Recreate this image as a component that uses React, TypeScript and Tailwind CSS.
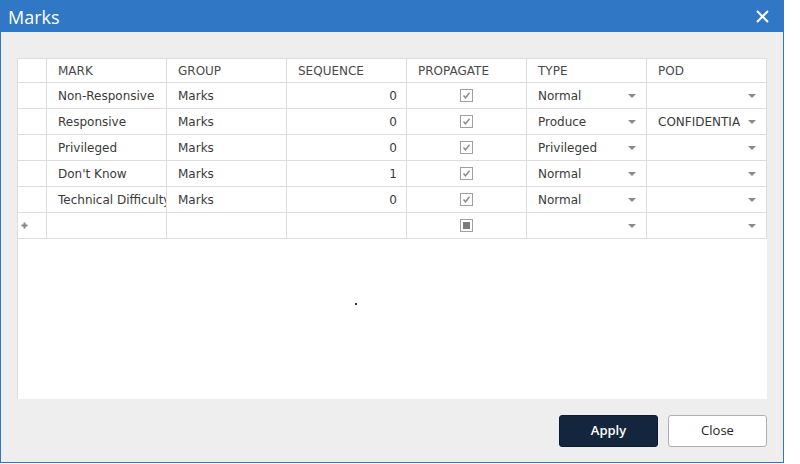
import React from 'react';

type Row = {
  mark: string;
  group: string;
  seq: string;
  propagate: 'checked' | 'empty';
  type: string;
  pod: string;
  isNew?: boolean;
};

const rows: Row[] = [
  { mark: 'Non-Responsive', group: 'Marks', seq: '0', propagate: 'checked', type: 'Normal', pod: '' },
  { mark: 'Responsive', group: 'Marks', seq: '0', propagate: 'checked', type: 'Produce', pod: 'CONFIDENTIAL' },
  { mark: 'Privileged', group: 'Marks', seq: '0', propagate: 'checked', type: 'Privileged', pod: '' },
  { mark: "Don't Know", group: 'Marks', seq: '1', propagate: 'checked', type: 'Normal', pod: '' },
  { mark: 'Technical Difficulty', group: 'Marks', seq: '0', propagate: 'checked', type: 'Normal', pod: '' },
  { mark: '', group: '', seq: '', propagate: 'empty', type: '', pod: '', isNew: true },
];

const cellBase = 'border-r border-b border-[#dddddd] flex items-center overflow-hidden whitespace-nowrap';
const cell = `h-[26px] ${cellBase}`;

const Caret: React.FC = () => (
  <svg width="8" height="4" viewBox="0 0 8 4" className="shrink-0">
    <path d="M0 0 H8 L4 4 Z" fill="#8a8a8a" />
  </svg>
);

const CheckBox: React.FC<{ state: 'checked' | 'empty' }> = ({ state }) => (
  <div className="w-[13px] h-[13px] border border-[#a0a0a0] bg-white flex items-center justify-center">
    {state === 'checked' ? (
      <svg width="9" height="9" viewBox="0 0 9 9">
        <path d="M1.5 4.5 L3.5 6.8 L7.5 1.8" stroke="#8a8a8a" strokeWidth="1.4" fill="none" />
      </svg>
    ) : (
      <div className="w-[7px] h-[7px] bg-[#7a7a7a]" />
    )}
  </div>
);

const headers = ['', 'MARK', 'GROUP', 'SEQUENCE', 'PROPAGATE', 'TYPE', 'POD'];

export default function App() {
  return (
    <div className="w-[800px] h-[464px] bg-white" style={{ fontFamily: 'Tahoma, "DejaVu Sans", Verdana, sans-serif' }}>
      <div className="w-[784px] h-[463px] border border-[#2f77c4] bg-[#eeeeee] flex flex-col">
        {/* title bar */}
        <div className="h-[31px] bg-[#3077c6] flex items-center justify-between pl-[7px] pr-[14px] shrink-0">
          <span className="text-white text-[18px] leading-none" style={{ fontFamily: '"Open Sans", "DejaVu Sans", sans-serif' }}>
            Marks
          </span>
          <svg width="13" height="13" viewBox="0 0 13 13">
            <path d="M1 1 L12 12 M12 1 L1 12" stroke="white" strokeWidth="2" />
          </svg>
        </div>

        {/* body */}
        <div className="flex-1 flex flex-col px-4 pt-[26px] pb-[15px]">
          <div className="h-[341px] bg-white border-l border-t border-[#dddddd] relative">
            <div className="grid grid-cols-[29px_120px_120px_120px_120px_120px_120px] text-[12px] text-[#3a3a3a]">
              {headers.map((h, i) => (
                <div key={i} className={`h-[24px] ${cellBase} text-[#4a4a4a] pl-[11px]`}>
                  {h}
                </div>
              ))}
              {rows.map((r, i) => (
                <React.Fragment key={i}>
                  <div className={`${cell} pl-[3px]`}>
                    {r.isNew && (
                      <svg width="7" height="7" viewBox="0 0 7 7">
                        <path d="M3.5 0.5 V6.5 M0.5 3.5 H6.5" stroke="#888888" strokeWidth="2" />
                      </svg>
                    )}
                  </div>
                  <div className={`${cell} pl-[11px]`}>{r.mark}</div>
                  <div className={`${cell} pl-[11px]`}>{r.group}</div>
                  <div className={`${cell} justify-end pr-[9px]`}>{r.seq}</div>
                  <div className={`${cell} justify-center`}>
                    <CheckBox state={r.propagate} />
                  </div>
                  <div className={`${cell} pl-[11px] pr-[10px] justify-between`}>
                    <span>{r.type}</span>
                    <Caret />
                  </div>
                  <div className={`${cell} pl-[11px] pr-[10px] justify-between`}>
                    <span className="w-[82px] overflow-hidden">{r.pod}</span>
                    <Caret />
                  </div>
                </React.Fragment>
              ))}
            </div>
            <div className="absolute left-[337px] top-[244px] w-[2px] h-[2px] bg-[#333333]" />
          </div>

          <div className="flex justify-end gap-[10px] mt-[16px]">
            <button
              className="w-[99px] h-[32px] rounded-[3px] bg-[#14263d] border border-[#0e1c2e] text-white text-[13px] font-semibold"
              style={{ fontFamily: '"Open Sans", sans-serif' }}
            >
              Apply
            </button>
            <button
              className="w-[99px] h-[32px] rounded-[3px] bg-white border border-[#b0b0b0] text-[#222] text-[13px]"
              style={{ fontFamily: '"Open Sans", sans-serif' }}
            >
              Close
            </button>
          </div>
        </div>
      </div>
    </div>
  );
}
